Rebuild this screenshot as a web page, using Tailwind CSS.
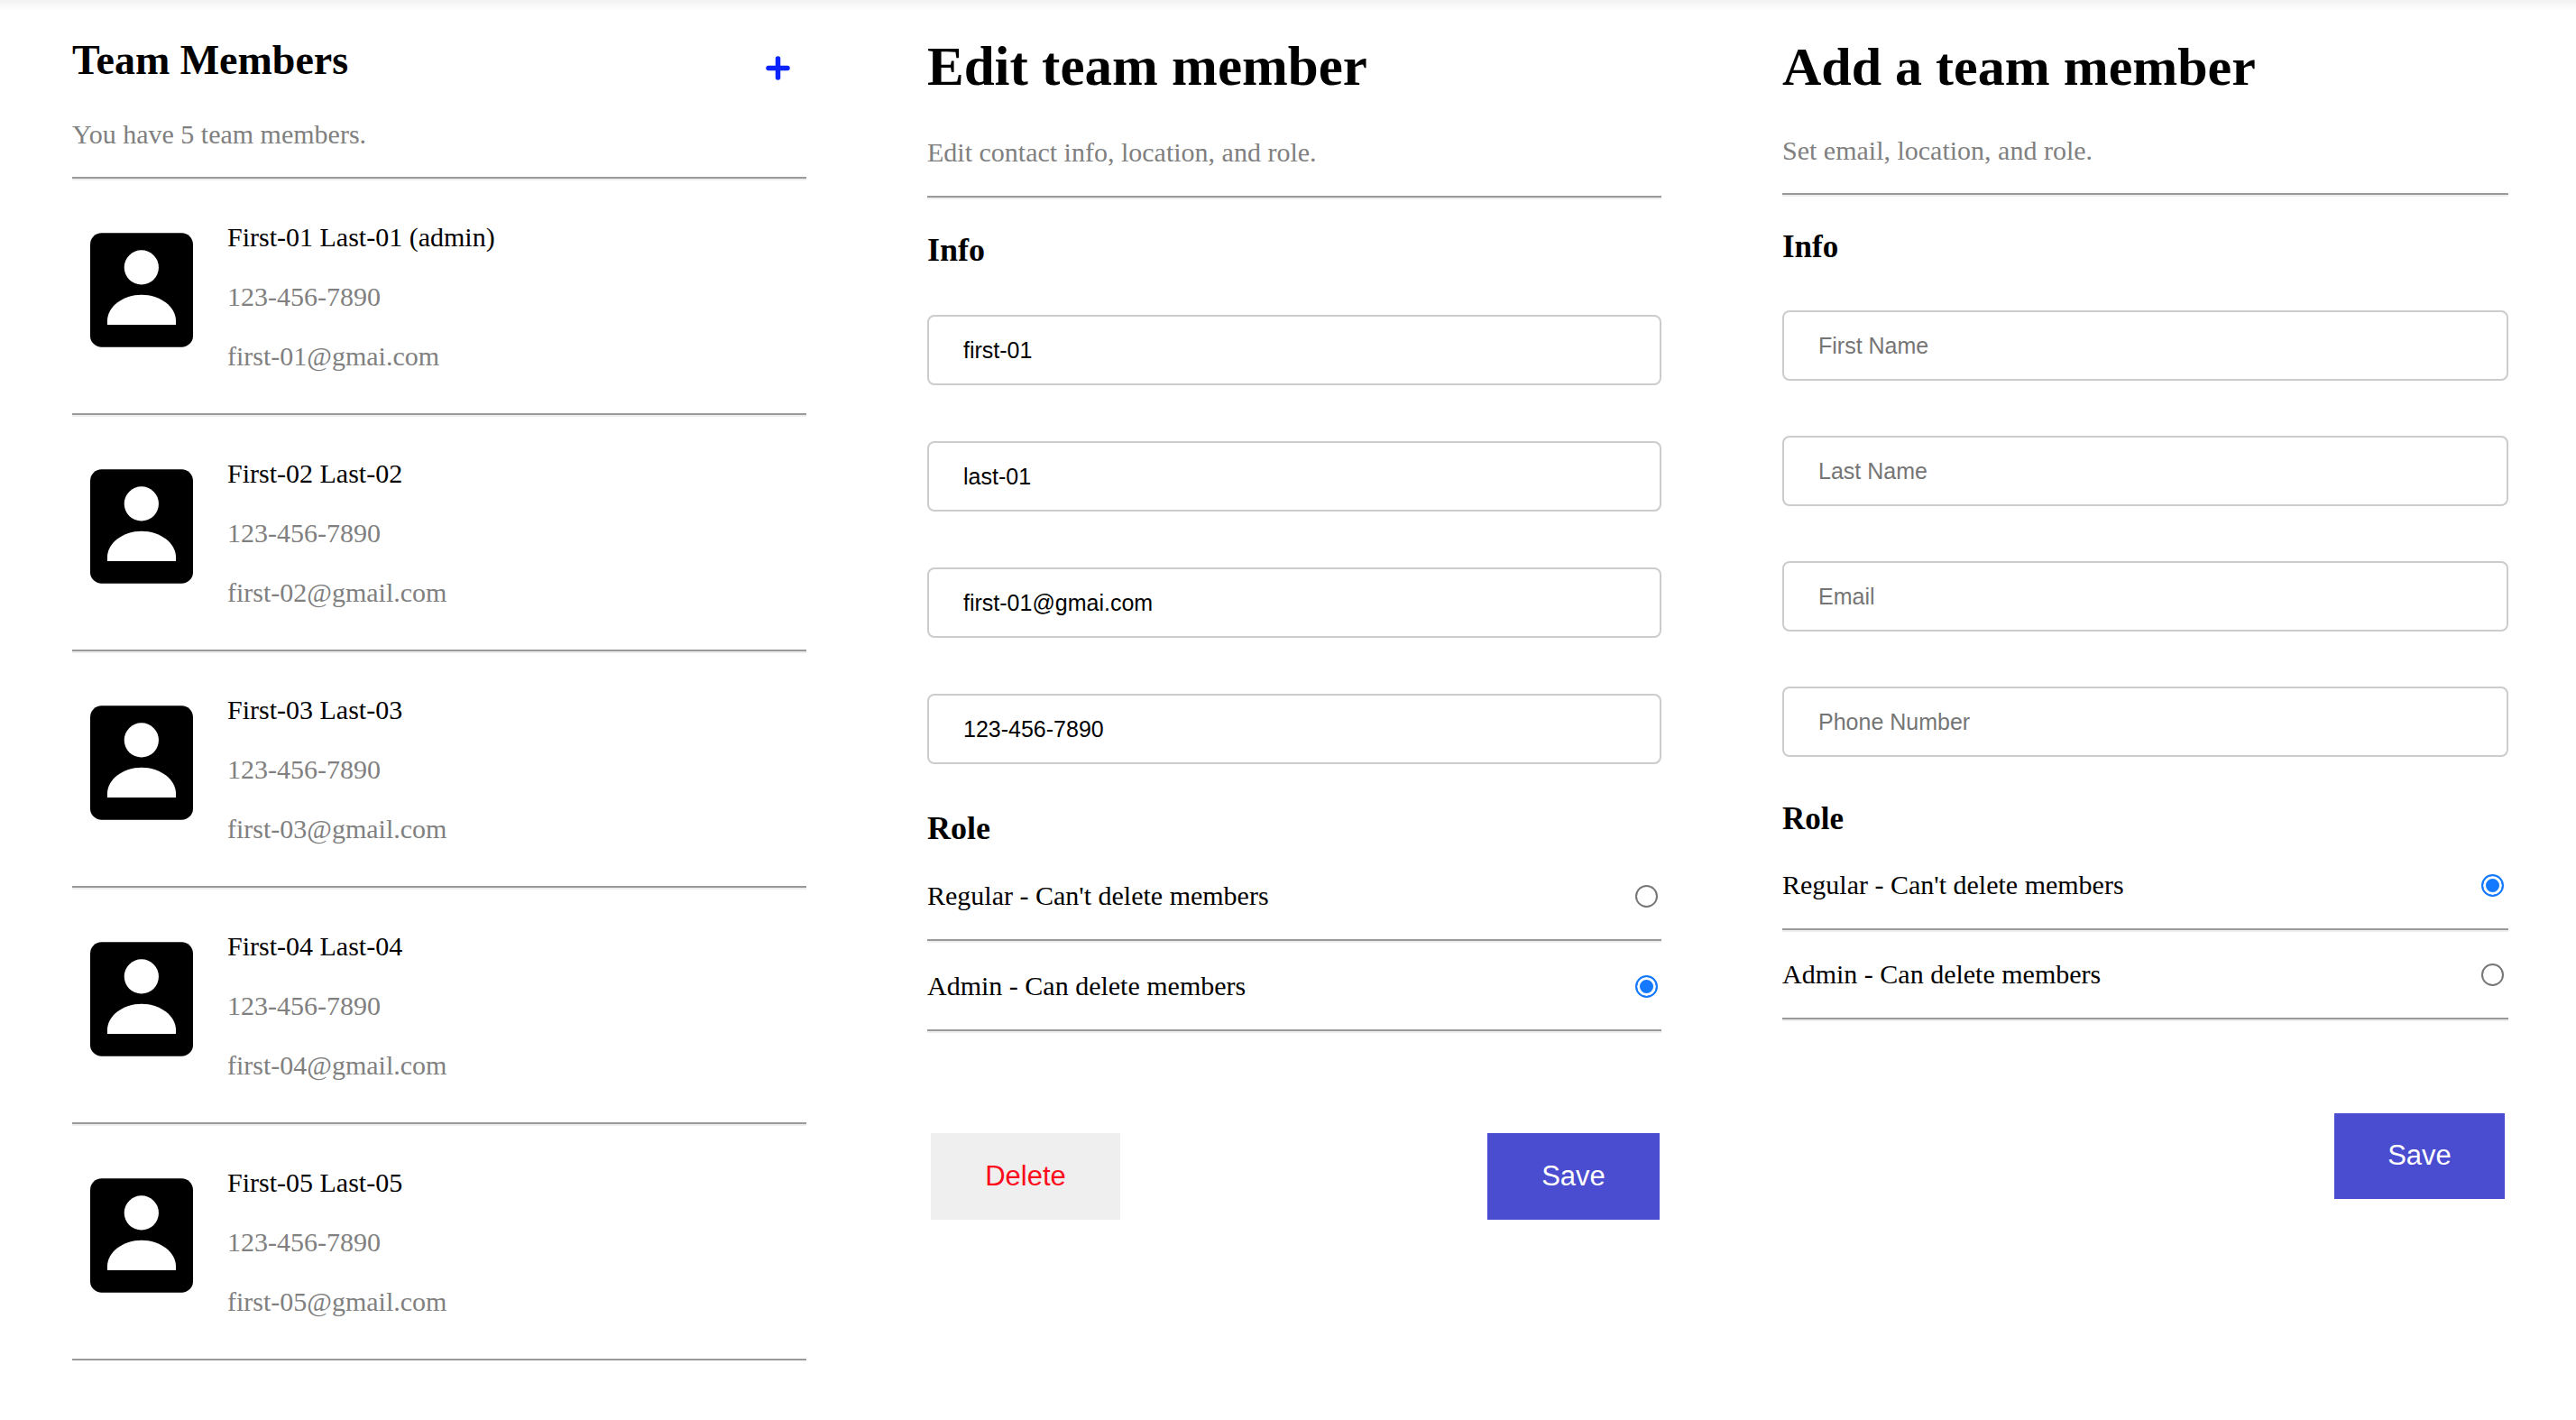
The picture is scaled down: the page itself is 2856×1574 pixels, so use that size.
<!DOCTYPE html>
<html lang="en">
<head>
<meta charset="utf-8">
<title>Team Members</title>
<script src="https://cdn.jsdelivr.net/npm/@tailwindcss/browser@4"></script>
</head>
<body class="min-h-screen bg-white text-black font-['Liberation_Serif',serif] bg-linear-to-b from-[#f2f2f2] to-white to-[12px]">
<svg class="hidden" aria-hidden="true">
  <symbol id="avatar" viewBox="0 0 343 381">
    <rect width="343" height="381" rx="38" fill="black"/>
    <circle cx="171" cy="115" r="57.500" fill="white"/>
    <path d="M57 306V294C57 245 110 206 171.500 206S286 245 286 294V306Z" fill="white"/>
  </symbol>
</svg>
<main class="grid grid-cols-3 gap-[134px] pt-[38px] pl-[80px] pr-[66px]">

  <section>
    <div class="flex justify-between items-end">
      <h1 class="text-[46px] leading-[58px] font-bold">Team Members</h1>
      <button type="button" aria-label="Add team member" class="mr-[18px] pb-[7px]">
        <svg class="block size-[27px]" viewBox="0 0 27 27" fill="none" stroke="#0b24fb" stroke-width="5.500" stroke-linecap="round"><path d="M13.500 3V24M3 13.500H24"/></svg>
      </button>
    </div>
    <p class="mt-[35px] text-[30px] leading-[36px] text-[#808080]">You have 5 team members.</p>
    <ul class="mt-[29px] border-t-2 border-[#9a9a9a]">
      <li class="flex items-start gap-[38px] pl-[20px] pt-[45px] pb-[45px] border-t-2 border-t-[#eeeeee] border-b-2 border-b-[#9a9a9a]">
        <svg class="w-[114px] h-[127px] mt-[13px]"><use href="#avatar"/></svg>
        <div class="flex flex-col gap-[30px] text-[30px] leading-[36px] text-[#808080]"><p class="text-black">First-01 Last-01 (admin)</p><p>123-456-7890</p><p>first-01@gmai.com</p></div>
      </li>
      <li class="flex items-start gap-[38px] pl-[20px] pt-[45px] pb-[45px] border-t-2 border-t-[#eeeeee] border-b-2 border-b-[#9a9a9a]">
        <svg class="w-[114px] h-[127px] mt-[13px]"><use href="#avatar"/></svg>
        <div class="flex flex-col gap-[30px] text-[30px] leading-[36px] text-[#808080]"><p class="text-black">First-02 Last-02</p><p>123-456-7890</p><p>first-02@gmail.com</p></div>
      </li>
      <li class="flex items-start gap-[38px] pl-[20px] pt-[45px] pb-[45px] border-t-2 border-t-[#eeeeee] border-b-2 border-b-[#9a9a9a]">
        <svg class="w-[114px] h-[127px] mt-[13px]"><use href="#avatar"/></svg>
        <div class="flex flex-col gap-[30px] text-[30px] leading-[36px] text-[#808080]"><p class="text-black">First-03 Last-03</p><p>123-456-7890</p><p>first-03@gmail.com</p></div>
      </li>
      <li class="flex items-start gap-[38px] pl-[20px] pt-[45px] pb-[45px] border-t-2 border-t-[#eeeeee] border-b-2 border-b-[#9a9a9a]">
        <svg class="w-[114px] h-[127px] mt-[13px]"><use href="#avatar"/></svg>
        <div class="flex flex-col gap-[30px] text-[30px] leading-[36px] text-[#808080]"><p class="text-black">First-04 Last-04</p><p>123-456-7890</p><p>first-04@gmail.com</p></div>
      </li>
      <li class="flex items-start gap-[38px] pl-[20px] pt-[45px] pb-[45px] border-t-2 border-t-[#eeeeee] border-b-2 border-b-[#9a9a9a]">
        <svg class="w-[114px] h-[127px] mt-[13px]"><use href="#avatar"/></svg>
        <div class="flex flex-col gap-[30px] text-[30px] leading-[36px] text-[#808080]"><p class="text-black">First-05 Last-05</p><p>123-456-7890</p><p>first-05@gmail.com</p></div>
      </li>
    </ul>
  </section>

  <form>
    <h1 class="text-[61px] leading-[72px] font-bold">Edit team member</h1>
    <p class="mt-[41px] text-[30px] leading-[36px] text-[#808080]">Edit contact info, location, and role.</p>
    <hr class="mt-[30px] h-[4px] border-t-2 border-b-2 border-t-[#9a9a9a] border-b-[#eeeeee]">
    <h2 class="mt-[35px] text-[36px] leading-[42px] font-bold">Info</h2>
    <div class="mt-[51px] flex flex-col gap-[62px] font-['Liberation_Sans',sans-serif] text-[25px]">
      <input type="text" aria-label="First Name" value="first-01" class="w-full h-[78px] px-[38px] border-2 border-[#cccccc] rounded-[8px] bg-white">
      <input type="text" aria-label="Last Name" value="last-01" class="w-full h-[78px] px-[38px] border-2 border-[#cccccc] rounded-[8px] bg-white">
      <input type="text" aria-label="Email" value="first-01@gmai.com" class="w-full h-[78px] px-[38px] border-2 border-[#cccccc] rounded-[8px] bg-white">
      <input type="text" aria-label="Phone Number" value="123-456-7890" class="w-full h-[78px] px-[38px] border-2 border-[#cccccc] rounded-[8px] bg-white">
    </div>
    <h2 class="mt-[50px] text-[36px] leading-[42px] font-bold">Role</h2>
    <div class="mt-[36px] text-[30px] leading-[36px]">
      <div class="flex items-center justify-between"><label for="edit-regular">Regular - Can't delete members</label><input id="edit-regular" type="radio" name="edit-role" class="appearance-none size-[25px] mr-[4px] rounded-full border-2 border-[#767676] bg-white checked:border-[#1579ff] checked:bg-[#1579ff] checked:shadow-[inset_0_0_0_3px_white]"></div>
      <hr class="mt-[30px] mb-[30px] h-[4px] border-t-2 border-b-2 border-t-[#9a9a9a] border-b-[#eeeeee]">
      <div class="flex items-center justify-between"><label for="edit-admin">Admin - Can delete members</label><input id="edit-admin" type="radio" name="edit-role" checked class="appearance-none size-[25px] mr-[4px] rounded-full border-2 border-[#767676] bg-white checked:border-[#1579ff] checked:bg-[#1579ff] checked:shadow-[inset_0_0_0_3px_white]"></div>
      <hr class="mt-[30px] h-[4px] border-t-2 border-b-2 border-t-[#9a9a9a] border-b-[#eeeeee]">
    </div>
    <div class="mt-[111px] ml-[4px] mr-[2px] flex justify-between font-['Liberation_Sans',sans-serif] text-[31px]">
      <button type="button" class="w-[210px] h-[96px] bg-[#efefef] text-[#fc0d1b]">Delete</button>
      <button type="submit" class="w-[191px] h-[96px] bg-[#4a4dd0] text-white">Save</button>
    </div>
  </form>

  <form class="pr-[9px]">
    <h1 class="text-[60px] leading-[72px] font-bold">Add a team member</h1>
    <p class="mt-[39px] text-[30px] leading-[36px] text-[#808080]">Set email, location, and role.</p>
    <hr class="mt-[29px] h-[4px] border-t-2 border-b-2 border-t-[#9a9a9a] border-b-[#eeeeee]">
    <h2 class="mt-[35px] text-[35px] leading-[42px] font-bold">Info</h2>
    <div class="mt-[49px] flex flex-col gap-[61px] font-['Liberation_Sans',sans-serif] text-[25px]">
      <input type="text" aria-label="First Name" placeholder="First Name" class="w-full h-[78px] px-[38px] border-2 border-[#cccccc] rounded-[8px] bg-white placeholder:text-[#757575]">
      <input type="text" aria-label="Last Name" placeholder="Last Name" class="w-full h-[78px] px-[38px] border-2 border-[#cccccc] rounded-[8px] bg-white placeholder:text-[#757575]">
      <input type="email" aria-label="Email" placeholder="Email" class="w-full h-[78px] px-[38px] border-2 border-[#cccccc] rounded-[8px] bg-white placeholder:text-[#757575]">
      <input type="tel" aria-label="Phone Number" placeholder="Phone Number" class="w-full h-[78px] px-[38px] border-2 border-[#cccccc] rounded-[8px] bg-white placeholder:text-[#757575]">
    </div>
    <h2 class="mt-[48px] text-[35px] leading-[42px] font-bold">Role</h2>
    <div class="mt-[34px] text-[30px] leading-[36px]">
      <div class="flex items-center justify-between"><label for="add-regular">Regular - Can't delete members</label><input id="add-regular" type="radio" name="add-role" checked class="appearance-none size-[25px] mr-[5px] rounded-full border-2 border-[#767676] bg-white checked:border-[#1579ff] checked:bg-[#1579ff] checked:shadow-[inset_0_0_0_3px_white]"></div>
      <hr class="mt-[30px] mb-[29px] h-[4px] border-t-2 border-b-2 border-t-[#9a9a9a] border-b-[#eeeeee]">
      <div class="flex items-center justify-between"><label for="add-admin">Admin - Can delete members</label><input id="add-admin" type="radio" name="add-role" class="appearance-none size-[25px] mr-[5px] rounded-full border-2 border-[#767676] bg-white checked:border-[#1579ff] checked:bg-[#1579ff] checked:shadow-[inset_0_0_0_3px_white]"></div>
      <hr class="mt-[30px] h-[4px] border-t-2 border-b-2 border-t-[#9a9a9a] border-b-[#eeeeee]">
    </div>
    <div class="mt-[102px] mx-[4px] flex justify-end font-['Liberation_Sans',sans-serif] text-[31px]">
      <button type="submit" class="w-[189px] h-[95px] bg-[#4a4dd0] text-white">Save</button>
    </div>
  </form>
</main>
</body>
</html>
